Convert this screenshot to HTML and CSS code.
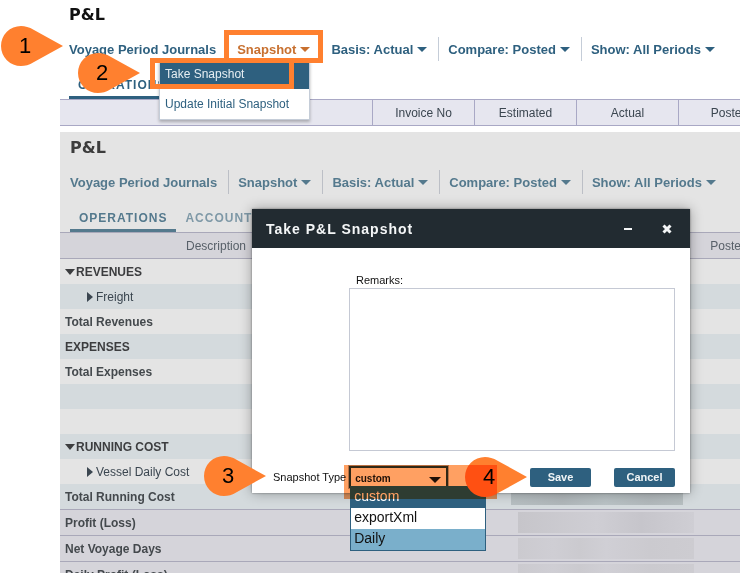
FILE: index.html
```html
<!DOCTYPE html>
<html lang="en">
<head>
<meta charset="utf-8">
<title>P&amp;L – Take Snapshot</title>
<link rel="stylesheet" href="styles.css">
</head>
<body>
<main class="guide">
  <section class="panel">
    <h1 class="title">P&amp;L</h1>
    <nav class="toolbar">
      <button class="tool">Voyage Period Journals</button>
      <button class="tool active">Snapshot<span class="caret"></span></button>
      <button class="tool">Basis: Actual<span class="caret"></span></button>
      <button class="tool">Compare: Posted<span class="caret"></span></button>
      <button class="tool">Show: All Periods<span class="caret"></span></button>
    </nav>
    <nav class="tabs"><a class="tab selected" href="#">OPERATIONS</a></nav>
    <table class="grid head-only">
      <colgroup><col class="wide"><col><col><col><col></colgroup>
      <thead><tr><th></th><th>Invoice No</th><th>Estimated</th><th>Actual</th><th>Posted</th></tr></thead>
    </table>
    <div class="menu">
      <button class="menu-item current">Take Snapshot</button>
      <button class="menu-item">Update Initial Snapshot</button>
    </div>
  </section>

  <section class="panel dimmed">
    <h2 class="title">P&amp;L</h2>
    <nav class="toolbar">
      <button class="tool">Voyage Period Journals</button>
      <button class="tool">Snapshot<span class="caret"></span></button>
      <button class="tool">Basis: Actual<span class="caret"></span></button>
      <button class="tool">Compare: Posted<span class="caret"></span></button>
      <button class="tool">Show: All Periods<span class="caret"></span></button>
    </nav>
    <nav class="tabs"><a class="tab selected" href="#">OPERATIONS</a><a class="tab" href="#">ACCOUNTS</a></nav>
    <table class="grid">
      <colgroup><col class="wide"><col><col><col><col></colgroup>
      <thead><tr><th>Description</th><th></th><th></th><th></th><th>Posted</th></tr></thead>
      <tbody>
        <tr class="group"><td><span class="open"></span>REVENUES</td><td colspan="4"></td></tr>
        <tr class="alt child"><td><span class="closed"></span>Freight</td><td colspan="4"></td></tr>
        <tr class="total"><td>Total Revenues</td><td colspan="4"></td></tr>
        <tr class="alt group"><td>EXPENSES</td><td colspan="4"></td></tr>
        <tr class="total"><td>Total Expenses</td><td colspan="4"></td></tr>
        <tr class="alt"><td></td><td colspan="4"></td></tr>
        <tr><td></td><td colspan="4"></td></tr>
        <tr class="alt group"><td><span class="open"></span>RUNNING COST</td><td colspan="4"></td></tr>
        <tr class="child"><td><span class="closed"></span>Vessel Daily Cost</td><td colspan="4"></td></tr>
        <tr class="alt total"><td>Total Running Cost</td><td colspan="4"><div class="redacted dark"></div></td></tr>
        <tr class="sum"><td>Profit (Loss)</td><td colspan="4"><div class="redacted"></div></td></tr>
        <tr class="sum"><td>Net Voyage Days</td><td colspan="4"><div class="redacted light"></div></td></tr>
        <tr class="sum"><td>Daily Profit (Loss)</td><td colspan="4"><div class="redacted light"></div></td></tr>
      </tbody>
    </table>

    <div class="dialog" role="dialog" aria-labelledby="dialog-title">
      <header class="dialog-head">
        <h3 id="dialog-title">Take P&amp;L Snapshot</h3>
        <button class="icon" aria-label="Minimize"><svg width="10" height="10" viewBox="0 0 10 10"><path d="M1 4h8v2H1z" fill="#f4f6f7"/></svg></button>
        <button class="icon" aria-label="Close"><svg width="10" height="10" viewBox="0 0 10 10"><path d="M1.500 1.500l7 7M8.500 1.500l-7 7" stroke="#f4f6f7" stroke-width="3"/></svg></button>
      </header>
      <form class="dialog-body">
        <div class="remarks">
          <label for="remarks">Remarks:</label>
          <textarea id="remarks"></textarea>
        </div>
        <div class="actions">
          <label for="type">Snapshot Type</label>
          <div class="select">
            <select id="type"><option>custom</option><option>exportXml</option><option>Daily</option></select>
            <span class="caret"></span>
            <div class="options" role="listbox">
              <div class="option chosen" role="option">custom</div>
              <div class="option" role="option">exportXml</div>
              <div class="option hover" role="option">Daily</div>
            </div>
          </div>
          <div class="buttons">
            <button type="button">Save</button>
            <button type="button">Cancel</button>
          </div>
        </div>
      </form>
    </div>
  </section>

  <div class="frame frame-snapshot"></div>
  <div class="frame frame-take"></div>
  <div class="pin pin-1"><svg viewBox="0 0 62 40"><path d="M62 20L33 36C28 39 24 40 20 40A20 20 0 0 1 20 0C24 0 28 1 33 4Z"/></svg><span>1</span></div>
  <div class="pin pin-2"><svg viewBox="0 0 62 40"><path d="M62 20L33 36C28 39 24 40 20 40A20 20 0 0 1 20 0C24 0 28 1 33 4Z"/></svg><span>2</span></div>
  <div class="pin pin-3"><svg viewBox="0 0 62 40"><path d="M62 20L33 36C28 39 24 40 20 40A20 20 0 0 1 20 0C24 0 28 1 33 4Z"/></svg><span>3</span></div>
  <div class="pin pin-4"><svg viewBox="0 0 62 40"><path d="M62 20L33 36C28 39 24 40 20 40A20 20 0 0 1 20 0C24 0 28 1 33 4Z"/></svg><span>4</span></div>
  <div class="marker"></div>
</main>
</body>
</html>
```
FILE: styles.css
```css
* { box-sizing: border-box; }
html, body { margin: 0; height: 100%; }
body {
  overflow: hidden;
  background: #fff;
  font-family: "Liberation Sans", Arial, sans-serif;
  font-size: 12px;
  color: #3b4650;
}
button, select, textarea { font-family: inherit; margin: 0; }
button { border: 0; background: none; padding: 0; cursor: pointer; }

.guide {
  position: relative;
  padding-left: 60px;
  height: 100%;
  overflow: hidden;
}
.panel { position: relative; margin-bottom: 6px; }
.title {
  margin: 0;
  padding: 4px 0 0 9px;
  height: 31px;
  font: 700 16px/22px "DejaVu Sans", Verdana, sans-serif;
  color: #111;
}

/* Toolbar */
.toolbar { display: flex; height: 36px; align-items: center; padding-left: 9px; }
.tool {
  display: flex;
  align-items: center;
  height: 24px;
  margin-right: 9px;
  padding-right: 11px;
  border-right: 1px solid #c5cdd8;
  font-size: 13px;
  font-weight: 700;
  color: #2e607f;
  white-space: nowrap;
}
.tool:last-child { border-right: 0; }
.tool.active { color: #c8702f; }
.caret {
  flex: none;
  margin-left: 4px;
  border: 5px solid transparent;
  border-top-color: currentColor;
  border-bottom: 0;
}

/* Tabs */
.tabs { display: flex; height: 32px; align-items: flex-end; padding-left: 9px; }
.tab {
  height: 28px;
  padding: 0 9px;
  border-bottom: 3px solid transparent;
  font-size: 12px;
  font-weight: 700;
  line-height: 28px;
  letter-spacing: 1px;
  color: #2e607f;
  text-decoration: none;
  opacity: .7;
}
.tab.selected { border-color: #2e607f; opacity: 1; }

/* Table */
.grid { width: 720px; table-layout: fixed; border-collapse: separate; border-spacing: 0; }
.grid col { width: 102px; }
.grid .wide { width: 312px; }
.grid th {
  height: 27px;
  padding: 0;
  border: solid #a9a8c5;
  border-width: 1px 0;
  background: #e6e6ef;
  font-weight: 400;
}
.head-only th + th { border-left-width: 1px; }
.grid td { height: 25px; padding: 0 5px; line-height: 14px; }
.alt td { background: #d4dadd; }
.group td { font-weight: 700; color: #3c3d3f; }
.total td, .sum td { font-weight: 700; color: #44494d; }
.child td:first-child { padding-left: 27px; }
.grid .sum td { height: 26px; background: #d5d4da; border-top: 1px solid #a9a8b9; }
.open, .closed { display: inline-block; border: 5px solid transparent; }
.open { border-top: 6px solid #3c3d3f; border-bottom: 0; margin-right: 1px; vertical-align: 1px; }
.closed { border-left: 6px solid #3b4650; border-right: 0; margin-right: 3px; vertical-align: -1px; }
.redacted {
  width: 176px;
  height: 21px;
  margin-left: 141px;
  background: linear-gradient(90deg, #c6c5ca, #cfced4 45%, #c6c5cb 70%, #cfced4);
}
.redacted.light { background: linear-gradient(90deg, #cbcacf, #cfced4 20%, #cbcacf 35%, #d0cfd5 50%, #cbcacf 75%, #cdccd1); }
.redacted.dark {
  width: 172px;
  height: 17px;
  margin-left: 134px;
  background: linear-gradient(90deg, #b7bfc2, #b0b7ba 30%, #b9c2c5 55%, #b2b9bc 80%, #b7bfc1);
}

.dimmed { background: #e4e4e4; }
.dimmed .title { height: 32px; padding: 5px 0 0 10px; color: #3c3c3c; }
.dimmed .toolbar, .dimmed .tabs { padding-left: 10px; }
.dimmed .tool { color: #54798d; border-color: #bcbfc6; }
.dimmed .tab { color: #54798d; }
.dimmed .tab.selected { border-color: #54798d; }
.dimmed th { background: #d5d4da; border-color: #a9a8b9; color: #586069; }

/* Drop-down menu under the Snapshot tool */
.menu {
  position: absolute;
  left: 99px;
  top: 60px;
  width: 151px;
  padding: 3px 0 4px;
  border: 1px solid #c5cdd8;
  border-top: 0;
  background: #fff;
  box-shadow: 0 2px 3px #0004;
}
.menu-item {
  display: block;
  width: 100%;
  height: 26px;
  padding: 0 5px;
  font-size: 12px;
  line-height: 22px;
  text-align: left;
  color: #2e607f;
  white-space: nowrap;
}
.menu-item.current { padding-bottom: 4px; background: #2e607f; color: #e6eef2; }
.menu-item + .menu-item { line-height: 30px; }

/* Dialog */
.dialog {
  position: absolute;
  left: 192px;
  top: 77px;
  width: 438px;
  background: #fff;
  box-shadow: 0 0 2px #0006, 0 0 12px #0005;
}
.dialog-head {
  display: flex;
  align-items: center;
  gap: 29px;
  height: 39px;
  padding: 0 18px 0 14px;
  background: #222b31;
  color: #f4f6f7;
}
.dialog-head h3 { flex: 1; margin: 0; font-size: 14px; letter-spacing: 1px; }
.icon { display: flex; }
.dialog-body { padding: 25px 15px 5px 21px; font-size: 11px; color: #111; }
.remarks { margin-left: 76px; }
.remarks label { display: block; padding-left: 7px; line-height: 15px; }
.remarks textarea {
  display: block;
  width: 100%;
  height: 163px;
  border: 1px solid #c5c9d4;
  background: #fff;
  resize: none;
}
.actions { display: flex; align-items: center; gap: 3px; margin-top: 15px; white-space: nowrap; }
.select { position: relative; width: 99px; color: #20190f; }
.select select {
  appearance: none;
  display: block;
  width: 100%;
  height: 22px;
  padding: 2px 4px 0;
  border: 2px solid #2f3d35;
  border-radius: 0;
  outline: 1px solid #b9b4b0;
  background: #fff;
  color: inherit;
  font-size: 10px;
  font-weight: 700;
}
.select .caret { position: absolute; right: 7px; top: 11px; border-width: 6px 6px 0; }
.options {
  position: absolute;
  left: 1px;
  top: 20px;
  width: 136px;
  border: 1px solid #2e607f;
  background: #fff;
  color: #111;
}
.option { height: 21px; padding-left: 3px; font-size: 14px; line-height: 19px; }
.option.chosen { background: #2e607f; color: #fff; }
.option.hover { background: #7aafcb; }
.buttons { display: flex; gap: 23px; margin-left: auto; }
.buttons button {
  width: 61px;
  height: 19px;
  border-radius: 2px;
  background: #2e607f;
  color: #f0f4f6;
  font-size: 11px;
  font-weight: 700;
}

/* Step callouts lying over the screens */
.frame { position: absolute; border: 5px solid #ff802f; }
.frame-snapshot { left: 224px; top: 30px; width: 99px; height: 33px; }
.frame-take { left: 150px; top: 58px; width: 144px; height: 31px; }
.pin { position: absolute; width: 62px; height: 40px; }
.pin svg { display: block; fill: #ff802f; }
.pin span {
  position: absolute;
  left: 4px;
  top: 0;
  width: 40px;
  font-size: 22px;
  line-height: 40px;
  text-align: center;
  color: #000;
}
.pin-1 { left: 1px; top: 26px; }
.pin-2 { left: 78px; top: 53px; }
.pin-3 { left: 204px; top: 456px; }
.pin-4 { left: 465px; top: 457px; }
.marker {
  position: absolute;
  left: 344px;
  top: 465px;
  width: 153px;
  height: 34px;
  background: #ffa062;
  mix-blend-mode: multiply;
}
```
